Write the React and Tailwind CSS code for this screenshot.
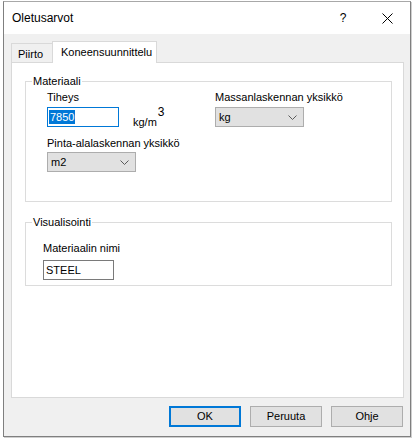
import React from 'react';

const Chevron = () => (
  <svg width="9" height="5" viewBox="0 0 9 5" className="shrink-0">
    <path d="M0.5 0.5 L4.5 4.5 L8.5 0.5" fill="none" stroke="#5a5a5a" strokeWidth="1" />
  </svg>
);

const Select = ({ value }) => (
  <div className="w-[89px] h-[20px] bg-[#e1e1e1] border border-[#adadad] flex items-center justify-between pl-[3px] pr-[6px]">
    <span>{value}</span>
    <Chevron />
  </div>
);

const Button = ({ children, primary }) => (
  <div
    className={`w-[72px] h-[21px] bg-[#e1e1e1] flex items-center justify-center ${
      primary ? 'border-2 border-[#0078d7]' : 'border border-[#adadad]'
    }`}
  >
    {children}
  </div>
);

export default function App() {
  return (
    <div className="w-[415px] h-[439px] bg-white pt-[1px] pl-[3px] font-['Liberation_Sans',Arial,sans-serif] text-[11px] leading-[13px] text-black">
      <div className="w-[408px] h-[436px] border border-[#7f7f7f] border-t-[#a8a8a8] bg-[#f0f0f0] flex flex-col shadow-[1px_1px_0_#cfcfcf]">
        {/* Title bar */}
        <div className="h-[32px] shrink-0 bg-white flex items-center pl-[8px] pr-[1px]">
          <span className="flex-1 text-[12px] leading-[16px]">Oletusarvot</span>
          <span className="w-[44px] text-center text-[12px]">?</span>
          <div className="w-[44px] flex justify-center">
            <svg width="11" height="11" viewBox="0 0 11 11">
              <path d="M0.5 0.5 L10.5 10.5 M10.5 0.5 L0.5 10.5" stroke="#000" strokeWidth="1" />
            </svg>
          </div>
        </div>

        <div className="flex-1 px-[7px] pt-[7px] flex flex-col">
          {/* Tabs */}
          <div className="flex items-end">
            <div className="w-[41px] h-[19px] border-l border-t border-[#d9d9d9] bg-[#f0f0f0] flex items-center pl-[6px] pt-[2px]">
              Piirto
            </div>
            <div className="relative z-10 -mb-[1px] w-[105px] h-[22px] border-l border-t border-r border-[#d9d9d9] bg-white flex items-center pl-[8px] pb-[1px]">
              Koneensuunnittelu
            </div>
          </div>

          {/* Tab panel */}
          <div className="w-[393px] h-[336px] border border-[#d9d9d9] bg-white pl-[13px]">
            <fieldset className="mt-[12px] w-[367px] border border-[#dcdcdc] pl-[21px] pt-[3px] pb-[29px]">
              <legend className="-ml-[15px] px-[1px]">Materiaali</legend>
              <div className="flex">
                <div className="w-[168px]">
                  <div>Tiheys</div>
                  <div className="flex items-start mt-[3px] h-[20px]">
                    <div className="w-[72px] h-[20px] border border-[#0078d7] flex items-center pl-[1px]">
                      <span className="bg-[#0078d7] text-white px-[1px] leading-[14px]">7850</span>
                    </div>
                    <span className="ml-[14px] mt-[9px]">kg/m</span>
                    <span className="text-[12px] ml-[1px] -mt-[1px]">3</span>
                  </div>
                  <div className="mt-[10px]">Pinta-alalaskennan yksikkö</div>
                  <div className="mt-[2px]">
                    <Select value="m2" />
                  </div>
                </div>
                <div>
                  <div>Massanlaskennan yksikkö</div>
                  <div className="mt-[3px]">
                    <Select value="kg" />
                  </div>
                </div>
              </div>
            </fieldset>

            <fieldset className="mt-[14px] w-[367px] border border-[#dcdcdc] pl-[17px] pt-[13px] pb-[5px]">
              <legend className="-ml-[11px] px-[1px]">Visualisointi</legend>
              <div>Materiaalin nimi</div>
              <div className="mt-[5px] w-[71px] h-[20px] border border-[#7a7a7a] flex items-center pl-[2px]">
                STEEL
              </div>
            </fieldset>
          </div>

          {/* Buttons */}
          <div className="mt-[8px] flex justify-end gap-[9px]">
            <Button primary>OK</Button>
            <Button>Peruuta</Button>
            <Button>Ohje</Button>
          </div>
        </div>
      </div>
    </div>
  );
}
